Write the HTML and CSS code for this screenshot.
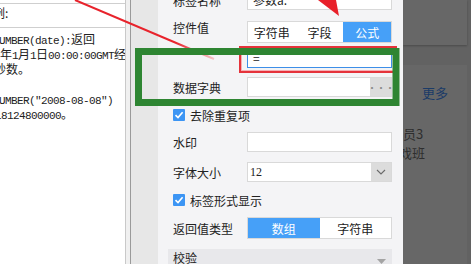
FILE: index.html
```html
<!DOCTYPE html>
<html lang="zh">
<head>
<meta charset="utf-8">
<title>设置</title>
<link rel="stylesheet" href="styles.css">
</head>
<body>
<div class="page">
  <div class="lp">
    <div class="lp-top"></div>
    <div class="lp-title">例:</div>
    <div class="code">
      <div class="ln l1"><span class="m">UMBER(date):</span>返回</div>
      <div class="ln l2">年<span class="m">1</span>月<span class="m">1</span>日<span class="m">00:00:00GMT</span>经</div>
      <div class="ln l3">秒数。</div>
      <div class="ln"></div>
      <div class="ln l1"><span class="m">UMBER("2008-08-08")</span></div>
      <div class="ln l6"><span class="m">18124800000</span>。</div>
    </div>
  </div>
  <div class="sep"></div>
  <div class="gut"></div>
  <div class="main">
    <div class="form">
      <div class="row r1">
        <span class="lbl">标签名称</span>
        <div class="inp"><span class="val">参数a.</span></div>
      </div>
      <div class="row r2">
        <span class="lbl">控件值</span>
        <div class="seg"><span>字符串</span><span>字段</span><span class="on">公式</span></div>
      </div>
      <div class="row r3">
        <span class="lbl"></span>
        <div class="inp focus"><span class="val">=</span></div>
      </div>
      <div class="row r4">
        <span class="lbl">数据字典</span>
        <div class="inp"><span class="fill"></span><span class="btn">···</span></div>
      </div>
      <div class="row r5 chkrow">
        <span class="chk"><svg width="12" height="12" viewBox="0 0 12 12"><path d="M2.5 6.2 L5 8.6 L9.6 3.2" fill="none" stroke="#fff" stroke-width="1.6"/></svg></span>
        <span>去除重复项</span>
      </div>
      <div class="row r6">
        <span class="lbl">水印</span>
        <div class="inp"></div>
      </div>
      <div class="row r7">
        <span class="lbl">字体大小</span>
        <div class="inp"><span class="val num fill">12</span><span class="btn arr"><svg width="10" height="6" viewBox="0 0 10 6"><path d="M1 1 L5 5 L9 1" fill="none" stroke="#6a6a6a" stroke-width="1.1"/></svg></span></div>
      </div>
      <div class="row r8 chkrow">
        <span class="chk"><svg width="12" height="12" viewBox="0 0 12 12"><path d="M2.5 6.2 L5 8.6 L9.6 3.2" fill="none" stroke="#fff" stroke-width="1.6"/></svg></span>
        <span>标签形式显示</span>
      </div>
      <div class="row r9">
        <span class="lbl">返回值类型</span>
        <div class="seg"><span class="on">数组</span><span>字符串</span></div>
      </div>
      <div class="sect">
        <span>校验</span>
        <svg width="9" height="5" viewBox="0 0 9 5"><path d="M0 0 L9 0 L4.5 5 Z" fill="#a4a4a4"/></svg>
      </div>
    </div>
  </div>
  <div class="ov">
    <div class="card c1"></div>
    <div class="card c2">
      <div class="more">更多</div>
      <div class="ct t1">员3</div>
      <div class="ct t2">戏班</div>
    </div>
  </div>
  <svg class="annot" width="471" height="264" viewBox="0 0 471 264">
    <defs>
      <linearGradient id="fade" x1="75" y1="0" x2="214" y2="59" gradientUnits="userSpaceOnUse">
        <stop offset="0" stop-color="#e8232c"/>
        <stop offset="0.72" stop-color="#e8232c"/>
        <stop offset="1" stop-color="#f6c4c7"/>
      </linearGradient>
    </defs>
    <line x1="75" y1="0" x2="214" y2="59" stroke="url(#fade)" stroke-width="2"/>
    <polygon points="318,0 336,0 339,16" fill="#e8202a"/>
    <rect x="240" y="47" width="156" height="25" fill="none" stroke="#e5333b" stroke-width="2"/>
    <rect x="241.5" y="48.5" width="153" height="22" fill="none" stroke="#f5b0b4" stroke-width="1"/>
    <rect x="138.5" y="51.5" width="257.5" height="51" fill="none" stroke="#2e8532" stroke-width="7"/>
  </svg>
</div>
</body>
</html>
```
FILE: styles.css
```css
* { box-sizing: border-box; margin: 0; padding: 0; }
html, body { width: 471px; height: 264px; overflow: hidden; background: #fff; }
body { font-family: "Noto Sans CJK SC", "Noto Sans", sans-serif; font-size: 12px; color: #222; }

.page { position: relative; display: flex; width: 471px; height: 264px; overflow: hidden; }

/* left panel */
.lp { width: 126px; flex: none; background: #fff; border-right: 1px solid #c9c9c9; display: flex; flex-direction: column; overflow: hidden; }
.lp-top { height: 4px; flex: none; border-bottom: 1px solid #cfcfcf; }
.lp-title { height: 23px; flex: none; line-height: 18px; text-indent: -7px; white-space: nowrap; }
.code { flex: 1; border-top: 1px solid #cfcfcf; padding-top: 3px; }
.ln { height: 15px; line-height: 15px; white-space: nowrap; }
.l1 { text-indent: -1px; }
.l3 { text-indent: -6px; }
.l6 { text-indent: -5px; }
.m { font-family: "Liberation Mono", monospace; font-size: 11px; letter-spacing: -0.6px; }

.sep { width: 5px; flex: none; background: #f0f0f0; border-right: 1px solid #9a9a9a; }
.gut { width: 27px; flex: none; background: #e7e7e7; }

/* main drawer */
.main { width: 245px; flex: none; background: #f4f4f6; padding: 0 11px 0 15px; overflow: hidden; }
.form { margin-top: -10px; display: flex; flex-direction: column; }
.row { display: flex; align-items: center; }
.lbl { width: 74px; flex: none; white-space: nowrap; }

.r1 { height: 20px; }
.r2 { height: 22px; margin-top: 11px; align-items: flex-start; }
.r2 .lbl { line-height: 14px; }
.r3 { height: 20px; margin-top: 5px; }
.r4 { height: 20px; margin-top: 9px; }
.r5 { height: 14px; margin-top: 11px; }
.r6 { height: 20px; margin-top: 10px; }
.r7 { height: 20px; margin-top: 10px; }
.r8 { height: 14px; margin-top: 11px; }
.r9 { height: 22px; margin-top: 10px; }

.inp { width: 145px; height: 100%; flex: none; display: flex; align-items: center; background: #fff; border: 1px solid #d9d9d9; }
.inp.focus { border-color: #3d8fe8; }
.val { padding-left: 5px; line-height: 18px; }
.num { font-family: "Liberation Serif", serif; font-size: 12px; padding-left: 2px; }
.fill { flex: 1; }
.btn { width: 21px; height: 100%; flex: none; background: #dcdcdc; color: #8a8a8a; display: flex; align-items: center; justify-content: center; font-size: 10px; letter-spacing: -1px; }
.arr { width: 20px; }

.seg { width: 145px; height: 22px; flex: none; display: flex; background: #fff; border: 1px solid #d9d9d9; }
.seg span { flex: 1; display: flex; align-items: center; justify-content: center; }
.seg .on { background: #46a0f8; color: #fff; }

.chkrow { gap: 5px; }
.chk { width: 12px; height: 12px; flex: none; background: #3c95f4; border-radius: 1px; display: flex; }

.sect { margin-top: 10px; margin-left: -5px; width: 224px; height: 24px; background: #e8e8eb; display: flex; align-items: flex-start; justify-content: space-between; padding: 0 6px 0 5px; line-height: 18px; }
.sect svg { margin-top: 10px; }

/* dimmed page on the right */
.ov { width: 68px; flex: none; background: #626262; padding-right: 4px; display: flex; flex-direction: column; gap: 20px; overflow: hidden; }
.card { background: #676767; }
.c1 { height: 45px; flex: none; box-shadow: 0 1px 2px rgba(0,0,0,0.25); }
.c2 { flex: 1; padding-top: 20px; }
.more { text-align: center; color: #1b3b67; font-size: 13px; line-height: 16px; }
.ct { color: #2e2e2e; font-size: 13px; line-height: 19px; white-space: nowrap; }
.t1 { margin-top: 23px; }
.t2 { text-indent: -4px; }

.annot { position: absolute; left: 0; top: 0; pointer-events: none; }
```
